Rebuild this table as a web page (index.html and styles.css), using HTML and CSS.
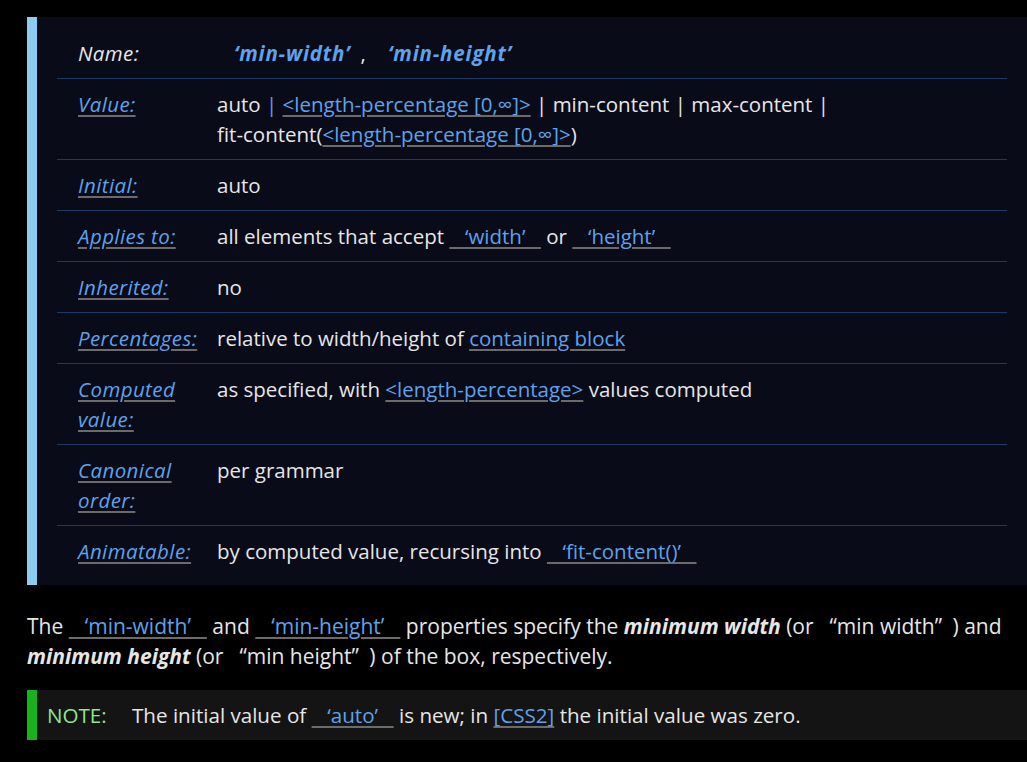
FILE: index.html
```html
<!DOCTYPE html>
<html lang="en">
<head>
<meta charset="utf-8">
<title>min-width, min-height</title>
<link rel="stylesheet" href="styles.css">
</head>
<body>
<main class="page">
  <div class="propdef">
    <div class="row">
      <div class="label plain">Name:</div>
      <div class="value"><span class="dfn">‘min-width’</span>, <span class="dfn">‘min-height’</span></div>
    </div>
    <div class="row">
      <div class="label"><a href="#">Value:</a></div>
      <div class="value">auto <span class="blue">|</span> <a href="#">&lt;length-percentage [0,∞]&gt;</a> | min-content | max-content | <span class="nowrap">fit-content(<a href="#">&lt;length-percentage [0,∞]&gt;</a>)</span></div>
    </div>
    <div class="row">
      <div class="label"><a href="#">Initial:</a></div>
      <div class="value">auto</div>
    </div>
    <div class="row">
      <div class="label"><a href="#">Applies to:</a></div>
      <div class="value">all elements that accept <a class="prop" href="#">&ensp;&nbsp;‘width’&ensp;&nbsp;</a> or <a class="prop" href="#">&ensp;&nbsp;‘height’&ensp;&nbsp;</a></div>
    </div>
    <div class="row">
      <div class="label"><a href="#">Inherited:</a></div>
      <div class="value">no</div>
    </div>
    <div class="row">
      <div class="label"><a href="#">Percentages:</a></div>
      <div class="value">relative to width/height of <a href="#">containing block</a></div>
    </div>
    <div class="row">
      <div class="label"><a href="#">Computed value:</a></div>
      <div class="value">as specified, with <a href="#">&lt;length-percentage&gt;</a> values computed</div>
    </div>
    <div class="row">
      <div class="label"><a href="#">Canonical order:</a></div>
      <div class="value">per grammar</div>
    </div>
    <div class="row">
      <div class="label"><a href="#">Animatable:</a></div>
      <div class="value">by computed value, recursing into <a class="prop" href="#">&ensp;&nbsp;‘fit-content()’&ensp;&nbsp;</a></div>
    </div>
  </div>

  <p class="para">The <a class="prop" href="#">&ensp;&nbsp;‘min-width’&ensp;&nbsp;</a> and <a class="prop" href="#">&ensp;&nbsp;‘min-height’&ensp;&nbsp;</a> properties specify the <b><i>minimum width</i></b> (or &ensp;“min width”&ensp;) and <b><i>minimum height</i></b> (or &ensp;“min height”&ensp;) of the box, respectively.</p>

  <p class="note"><span class="note-label">NOTE:</span>The initial value of <a class="prop" href="#">&ensp;&nbsp;‘auto’&ensp;&nbsp;</a> is new; in <a href="#">[CSS2]</a> the initial value was zero.</p>
</main>
</body>
</html>
```

FILE: styles.css
```css
html, body {
  margin: 0;
  padding: 0;
  background: #000;
}

body {
  font-family: "Open Sans", "Liberation Sans", sans-serif;
  font-size: 20.5px;
  line-height: 30px;
  color: #e6e6e6;
}

.page {
  padding: 17px 0 0 27px;
  width: 1000px;
}

a {
  color: #5ea2ea;
  text-decoration: underline;
  text-decoration-color: #6b6b6b;
  text-underline-offset: 3px;
}

.blue {
  color: #5ea2ea;
}

.nowrap {
  white-space: nowrap;
}

.propdef {
  border-left: 10px solid #8ccbf2;
  background: #0a0b19;
  padding: 11px 20px 9px 20px;
}

.row {
  display: grid;
  grid-template-columns: 139px 1fr;
  padding: 10px 0 10px 21px;
  border-bottom: 1px solid #1b3a66;
}

.row:last-child {
  border-bottom: none;
}

.label {
  font-style: italic;
  letter-spacing: 0.4px;
  padding-right: 8px;
}

.label.plain {
  color: #e6e6e6;
}

.dfn {
  color: #5ea2ea;
  font-weight: bold;
  font-style: italic;
  letter-spacing: 0.8px;
  padding: 0 10px 0 17px;
}

.para {
  margin: 26px 0 19px 0;
  font-size: 21px;
}

.para b {
  font-weight: bold;
}

.note {
  margin: 0;
  border-left: 10px solid #19b11d;
  background: #141414;
  padding: 10px;
  font-size: 20.6px;
}

.note-label {
  color: #8ee68e;
  display: inline-block;
  width: 85px;
}
```
